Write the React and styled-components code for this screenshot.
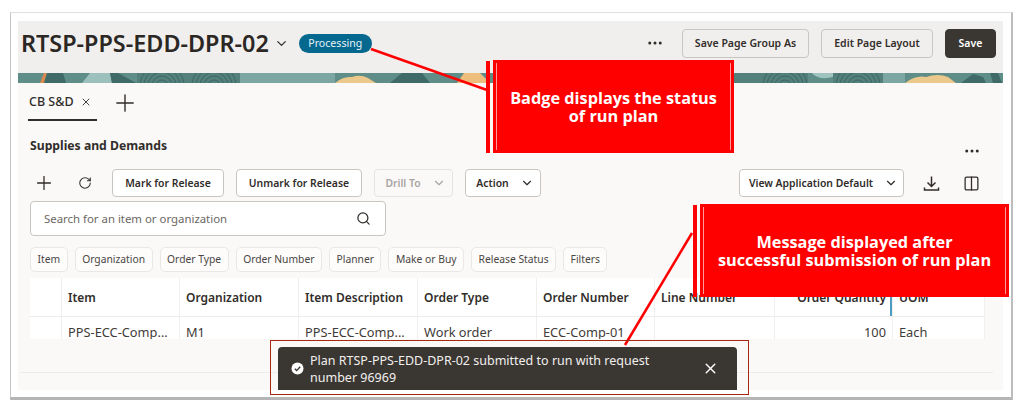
import React from 'react';
import styled, { createGlobalStyle } from 'styled-components';
import { ChevronDown, Columns2, Ellipsis, Plus, RotateCw, Search, X } from 'lucide-react';

const FONT = '"Noto Sans", "Open Sans", sans-serif';

const chips = ['Item', 'Organization', 'Order Type', 'Order Number', 'Planner', 'Make or Buy', 'Release Status', 'Filters'];

const columns = [
    { label: '', value: '' },
    { label: 'Item', value: 'PPS-ECC-Comp...' },
    { label: 'Organization', value: 'M1' },
    { label: 'Item Description', value: 'PPS-ECC-Comp...' },
    { label: 'Order Type', value: 'Work order' },
    { label: 'Order Number', value: 'ECC-Comp-01' },
    { label: 'Line Number', value: '' },
    { label: 'Order Quantity', value: '100', right: true },
    { label: 'UOM', value: 'Each' },
];

// concentric rings in the banner artwork
const ringCentres = [144, 196, 767, 840];
const ringRadii = [6, 10, 14, 18, 22];

const Banner = () => (
    <BannerStrip viewBox="0 0 985 10" preserveAspectRatio="none">
        <rect width="985" height="10" fill="#5f8d88" />
        <path d="M22 10 L26 0 L29 0 L26 10 Z" fill="#dc8a4e" />
        <path d="M29 0 H45 L48 10 H26 Z" fill="#3f6a68" />
        <path d="M64 10 L72 0 H92 L94 10 Z" fill="#9cc0bb" />
        <path d="M92 0 H100 L118 10 H94 Z" fill="#3f6a68" />
        <rect x="119" width="103" height="10" fill="#54807c" />
        <rect x="222" width="95" height="10" fill="#7ba6a1" />
        <path d="M317 10 Q325 3 334 4 Q342 1 350 5 L358 10 Z" fill="#ebc98c" />
        <path d="M372 10 L384 0 H404 L412 10 Z" fill="#3f6a68" />
        <path d="M439 10 L446 0 H462 L472 10 Z" fill="#eebf7c" />
        <rect x="640" width="150" height="10" fill="#54807c" />
        <path d="M794 0 H820 Q816 6 803 5 Q796 3 794 0 Z" fill="#9fc4c0" />
        <rect x="815" width="50" height="10" fill="#54807c" />
        <rect x="865" width="22" height="10" fill="#7ba6a1" />
        <path d="M887 10 Q898 2 908 4 Q920 0 930 4 L938 10 Z" fill="#ebc98c" />
        <path d="M943 10 L955 1 L965 4 L968 10 Z" fill="#3f6a68" />
        <path d="M972 0 H980 L984 10 H975 Z" fill="#3f6a68" />
        {ringCentres.map(cx => ringRadii.map(r => (
            <circle key={`${cx}-${r}`} cx={cx} cy="13" r={r} fill="none" stroke="#325a58" strokeWidth="0.7" />
        )))}
    </BannerStrip>
);

const TrayDownload = () => (
    <svg width="17" height="17" viewBox="0 0 17 17" fill="none" stroke="#312d2a" strokeWidth="1.5">
        <path d="M8.5 1.5 V11 M4.5 7.5 L8.5 11.5 L12.5 7.5" />
        <path d="M1.5 12.5 V15 H15.5 V12.5" />
    </svg>
);

const SuccessIcon = () => (
    <svg width="13" height="13" viewBox="0 0 13 13">
        <circle cx="6.5" cy="6.5" r="6" fill="#fff" />
        <path d="M3.8 6.8 L5.7 8.6 L9.2 4.8" fill="none" stroke="#3a3632" strokeWidth="1.4" />
    </svg>
);

const App = () => (
    <>
        <GlobalStyle />
        <Frame>
            <Page>
                <Header>
                    <Title>RTSP-PPS-EDD-DPR-02</Title>
                    <TitleCaret><ChevronDown size={15} strokeWidth={2} /></TitleCaret>
                    <Badge>Processing</Badge>
                    <HeaderActions>
                        <Ellipsis size={18} color="#312d2a" />
                        <HeaderButton $width={127} $gap={18}>Save Page Group As</HeaderButton>
                        <HeaderButton $width={112} $gap={12}>Edit Page Layout</HeaderButton>
                        <HeaderButton $width={51} $gap={12} $primary>Save</HeaderButton>
                    </HeaderActions>
                </Header>
                <Banner />
                <Content>
                    <TabRow>
                        <Tab>
                            CB S&amp;D
                            <X size={12} strokeWidth={1.8} />
                        </Tab>
                        <AddTab><Plus size={28} strokeWidth={1.2} /></AddTab>
                    </TabRow>
                    <SectionHead>
                        <SectionTitle>Supplies and Demands</SectionTitle>
                        <SectionMenu><Ellipsis size={18} color="#312d2a" /></SectionMenu>
                    </SectionHead>
                    <Toolbar>
                        <IconSlot $width={28}><Plus size={22} strokeWidth={1.4} /></IconSlot>
                        <IconSlot $width={54}><RotateCw size={14} strokeWidth={1.8} /></IconSlot>
                        <ToolButton $width={112}>Mark for Release</ToolButton>
                        <ToolButton $width={126} $gap={12}>Unmark for Release</ToolButton>
                        <ToolButton $width={79} $gap={12} $disabled $caret>
                            Drill To <ChevronDown size={14} />
                        </ToolButton>
                        <ToolButton $width={76} $gap={12} $caret>
                            Action <ChevronDown size={14} />
                        </ToolButton>
                        <ToolbarEnd>
                            <ToolButton $width={165} $caret>
                                View Application Default <ChevronDown size={14} />
                            </ToolButton>
                            <IconSlot $width={54}><TrayDownload /></IconSlot>
                            <IconSlot $width={26}><Columns2 size={17} strokeWidth={1.8} /></IconSlot>
                        </ToolbarEnd>
                    </Toolbar>
                    <SearchBox>
                        <SearchHint>Search for an item or organization</SearchHint>
                        <Search size={15} strokeWidth={2} color="#312d2a" />
                    </SearchBox>
                    <ChipRow>
                        {chips.map(chip => <Chip key={chip}>{chip}</Chip>)}
                    </ChipRow>
                    <Table>
                        {columns.map((col, i) => (
                            <HeadCell key={`h${i}`} $right={col.right} $resizer={col.right}>{col.label}</HeadCell>
                        ))}
                        {columns.map((col, i) => (
                            <BodyCell key={`b${i}`} $right={col.right}>{col.value}</BodyCell>
                        ))}
                    </Table>
                    <FooterRule />
                </Content>
                <Toast>
                    <SuccessIcon />
                    <ToastText>Plan RTSP-PPS-EDD-DPR-02 submitted to run with request number 96969</ToastText>
                    <ToastClose><X size={17} strokeWidth={2} /></ToastClose>
                </Toast>
            </Page>
            <Connectors viewBox="0 0 1021 403">
                <line x1="371" y1="49" x2="487" y2="90" stroke="#f00" strokeWidth="2.5" />
                <line x1="692" y1="233" x2="625" y2="345" stroke="#f00" strokeWidth="2.5" />
                <rect x="270.5" y="340.5" width="478" height="54" fill="none" stroke="#a5290f" strokeWidth="1" />
            </Connectors>
            <Callout $left={482} $top={47} $width={241}>
                Badge displays the status<br />of run plan
            </Callout>
            <Callout $left={689} $top={191} $width={309}>
                Message displayed after<br />successful submission of run plan
            </Callout>
        </Frame>
    </>
);

export default App;

const GlobalStyle = createGlobalStyle`
    * {
        box-sizing: border-box;
    }
    body {
        margin: 0;
        background: #fff;
        font-family: ${FONT};
        color: #312d2a;
    }
`;

const Frame = styled.div`
    position: relative;
    width: 1003px;
    height: 388px;
    margin: 12px 0 0 10px;
    padding: 8px 8px 7px 7px;
    background: #fff;
    border: 1px solid #e0e0e0;
    border-left: 1px solid #c4c4c4;
    border-right: 2px solid #bdbdbd;
    border-bottom: 3px solid #b5b5b5;
`;

const Page = styled.div`
    position: relative;
    display: flex;
    flex-direction: column;
    height: 100%;
    overflow: hidden;
    background: #fbf9f8;
`;

const Header = styled.header`
    display: flex;
    align-items: center;
    flex: none;
    height: 52px;
    padding: 0 7px 8px 3px;
    background: #f1efed;
`;

const Title = styled.h1`
    margin: 0;
    font-size: 23.4px;
    font-weight: 600;
    white-space: nowrap;
    color: #2b2724;
`;

const TitleCaret = styled.span`
    display: flex;
    margin-left: 5px;
`;

const Badge = styled.span`
    margin-left: 10px;
    padding: 0 9.5px;
    height: 19px;
    line-height: 18px;
    border-radius: 10px;
    background: #04688f;
    color: #e8f3f7;
    font-size: 10.6px;
`;

const HeaderActions = styled.div`
    display: flex;
    align-items: center;
    margin-left: auto;
`;

const HeaderButton = styled.button`
    width: ${p => p.$width}px;
    height: 29px;
    margin-left: ${p => p.$gap}px;
    padding: 0;
    border: 1px solid ${p => (p.$primary ? '#3a3632' : '#c9c6c2')};
    border-radius: 4px;
    background: ${p => (p.$primary ? '#3a3632' : '#f1efed')};
    color: ${p => (p.$primary ? '#fff' : '#312d2a')};
    font-family: ${FONT};
    font-size: 10.5px;
    font-weight: 600;
    white-space: nowrap;
`;

const BannerStrip = styled.svg`
    display: block;
    flex: none;
    width: 100%;
    height: 10px;
`;

const Content = styled.main`
    flex: 1;
    min-height: 0;
    padding: 0 18px 0 12px;
`;

const TabRow = styled.div`
    display: flex;
    align-items: flex-start;
    height: 38px;
`;

const Tab = styled.div`
    display: flex;
    align-items: center;
    gap: 6px;
    width: 69px;
    height: 38px;
    margin-left: -2px;
    padding: 1px 0 0 1px;
    border-bottom: 2px solid #312d2a;
    font-size: 12.5px;
    font-weight: 500;
    white-space: nowrap;
`;

const AddTab = styled.span`
    display: flex;
    margin: 6px 0 0 14px;
`;

const SectionHead = styled.div`
    display: flex;
    align-items: flex-start;
    justify-content: space-between;
    height: 48px;
    padding: 16px 4px 0 0;
`;

const SectionTitle = styled.h2`
    margin: 0;
    font-size: 12.2px;
    line-height: 18px;
    font-weight: 700;
`;

const SectionMenu = styled.span`
    display: flex;
    margin-top: 5px;
`;

const Toolbar = styled.div`
    display: flex;
    align-items: center;
    height: 28px;
`;

const ToolbarEnd = styled.div`
    display: flex;
    align-items: center;
    margin-left: auto;
    padding-right: 1px;
`;

const IconSlot = styled.span`
    display: flex;
    justify-content: center;
    width: ${p => p.$width}px;
    color: #312d2a;
`;

const ToolButton = styled.button`
    display: flex;
    align-items: center;
    justify-content: center;
    gap: ${p => (p.$caret ? 11 : 8)}px;
    width: ${p => p.$width}px;
    height: 28px;
    margin-left: ${p => p.$gap || 0}px;
    padding: 0 0 0 ${p => (p.$caret ? 4 : 0)}px;
    border: 1px solid ${p => (p.$disabled ? '#e6e3e0' : '#c9c6c2')};
    border-radius: 4px;
    background: ${p => (p.$disabled ? '#fbf9f8' : '#fff')};
    color: ${p => (p.$disabled ? '#a8a5a2' : '#312d2a')};
    font-family: ${FONT};
    font-size: 10.4px;
    font-weight: 600;
    white-space: nowrap;
`;

const SearchBox = styled.div`
    display: flex;
    align-items: center;
    justify-content: space-between;
    width: 356px;
    height: 35px;
    margin-top: 4px;
    padding: 0 14px 0 13px;
    background: #fff;
    border: 1px solid #c9c6c2;
    border-radius: 4px;
`;

const SearchHint = styled.span`
    font-size: 11.4px;
    color: #6b6763;
`;

const ChipRow = styled.div`
    display: flex;
    gap: 7px;
    margin-top: 11px;
`;

const Chip = styled.span`
    height: 25px;
    padding: 0 6.5px;
    line-height: 23px;
    border: 1px solid #eae7e4;
    border-radius: 5px;
    background: #fdfcfb;
    font-size: 10.3px;
    color: #4a4643;
    white-space: nowrap;
`;

const Table = styled.div`
    display: grid;
    grid-template-columns: 32px 118px 119px 119px 119px 118px 120px 118px 92px;
    grid-template-rows: 39px 22px;
    width: 955px;
    margin-top: 6px;
    overflow: hidden;
    background: #fff;
`;

const Cell = styled.div`
    padding: 0 6px;
    text-align: ${p => (p.$right ? 'right' : 'left')};
    border-right: 1px solid #f1efed;
    white-space: nowrap;
    overflow: hidden;
`;

const HeadCell = styled(Cell)`
    position: relative;
    line-height: 39px;
    font-size: 12px;
    font-weight: 600;
    border-bottom: 1px solid #eeecea;
    ${p => p.$resizer && `
        &::after {
            content: '';
            position: absolute;
            right: 0;
            top: 12px;
            bottom: 0;
            width: 2px;
            background: #4d9cc4;
        }
    `}
`;

const BodyCell = styled(Cell)`
    line-height: 30px;
    font-size: 12.8px;
    color: #3f3b38;
`;

const FooterRule = styled.div`
    height: 1px;
    margin: 33px -8px 0 -10px;
    background: #eeecea;
`;

const Toast = styled.div`
    position: absolute;
    left: 260px;
    bottom: 0;
    display: flex;
    align-items: center;
    width: 459px;
    height: 43px;
    padding: 0 18px 0 13px;
    border-radius: 4px 4px 0 0;
    background: #3a3632;
    color: #f2f0ee;
`;

const ToastText = styled.p`
    width: 375px;
    margin: 0 0 0 6px;
    font-size: 12.5px;
    line-height: 17px;
`;

const ToastClose = styled.span`
    display: flex;
    margin-left: auto;
    color: #fff;
`;

const Connectors = styled.svg`
    position: absolute;
    left: -11px;
    top: -13px;
    width: 1021px;
    height: 403px;
    pointer-events: none;
`;

const Callout = styled.div`
    position: absolute;
    left: ${p => p.$left}px;
    top: ${p => p.$top}px;
    display: flex;
    align-items: center;
    justify-content: center;
    width: ${p => p.$width}px;
    height: 93px;
    background: #f00;
    color: #fff;
    font-family: "Open Sans", sans-serif;
    font-size: 16.3px;
    font-weight: 700;
    line-height: 18px;
    text-align: center;
    &::before {
        content: '';
        position: absolute;
        left: 3px;
        right: 3px;
        top: 3px;
        bottom: 3px;
        border-left: 1px solid #ff9a9a;
        border-right: 1px solid #ff9a9a;
    }
    &::after {
        content: '';
        position: absolute;
        left: -7px;
        top: 1px;
        bottom: 0;
        width: 4px;
        background: #f00;
    }
`;
